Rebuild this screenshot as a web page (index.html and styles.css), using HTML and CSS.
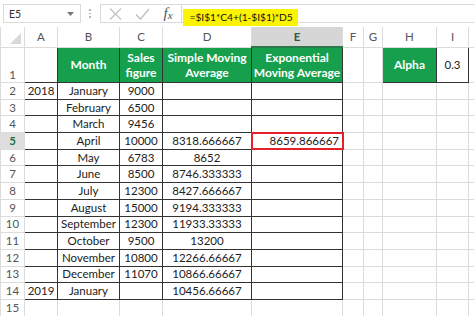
FILE: index.html
```html
<!DOCTYPE html>
<html lang="en">
  <head>
    <meta charset="UTF-8" />
    <link rel="stylesheet" href="styles.css">
    <title>Exponential Moving Average</title>
  </head>
  <body>
    <div class="formulaBar">
      <div class="nameBox">
        <span>E5</span>
        <svg class="dropArrow" width="7" height="4" viewBox="0 0 7 4"><path d="M0 0h7L3.5 4z" fill="#777"/></svg>
      </div>
      <div class="grip"><i></i><i></i><i></i></div>
      <div class="fxBox">
        <svg width="13" height="12" viewBox="0 0 13 12"><path d="M1 0.5L12 11.5M12 0.5L1 11.5" stroke="#c4c4c4" stroke-width="1.4" fill="none"/></svg>
        <svg width="15" height="12" viewBox="0 0 15 12"><path d="M1 6.5L5.5 11L14 1" stroke="#c4c4c4" stroke-width="1.6" fill="none"/></svg>
        <span class="fx">f<sub>x</sub></span>
      </div>
      <div class="formulaInput"><span class="formulaText">=$I$1*C4+(1-$I$1)*D5</span></div>
    </div>

    <table class="sheet">
      <colgroup>
        <col style="width:24px"><col style="width:33px"><col style="width:62px"><col style="width:43px">
        <col style="width:89px"><col style="width:91px"><col style="width:21px"><col style="width:19px">
        <col style="width:54px"><col style="width:32px"><col style="width:10px">
      </colgroup>
      <tr class="colHead">
        <th class="corner"><span class="tri"></span></th>
        <th>A</th><th>B</th><th>C</th><th>D</th><th class="picked">E</th><th>F</th><th>G</th><th>H</th><th>I</th><th></th>
      </tr>
      <tr class="tall">
        <th class="rowNum">1</th>
        <td class="box"></td>
        <td class="box head">Month</td>
        <td class="box head">Sales<br>figure</td>
        <td class="box head">Simple Moving<br>Average</td>
        <td class="box head">Exponential<br>Moving Average</td>
        <td></td><td></td>
        <td class="box head">Alpha</td>
        <td class="box">0.3</td>
        <td></td>
      </tr>
      <tr><th class="rowNum">2</th><td class="box">2018</td><td class="box">January</td><td class="box">9000</td><td class="box"></td><td class="box"></td><td></td><td></td><td></td><td></td><td></td></tr>
      <tr><th class="rowNum">3</th><td class="box"></td><td class="box">February</td><td class="box">6500</td><td class="box"></td><td class="box"></td><td></td><td></td><td></td><td></td><td></td></tr>
      <tr><th class="rowNum">4</th><td class="box"></td><td class="box">March</td><td class="box">9456</td><td class="box"></td><td class="box"></td><td></td><td></td><td></td><td></td><td></td></tr>
      <tr><th class="rowNum picked">5</th><td class="box"></td><td class="box">April</td><td class="box">10000</td><td class="box">8318.666667</td><td class="box active">8659.866667</td><td></td><td></td><td></td><td></td><td></td></tr>
      <tr><th class="rowNum">6</th><td class="box"></td><td class="box">May</td><td class="box">6783</td><td class="box">8652</td><td class="box"></td><td></td><td></td><td></td><td></td><td></td></tr>
      <tr><th class="rowNum">7</th><td class="box"></td><td class="box">June</td><td class="box">8500</td><td class="box">8746.333333</td><td class="box"></td><td></td><td></td><td></td><td></td><td></td></tr>
      <tr><th class="rowNum">8</th><td class="box"></td><td class="box">July</td><td class="box">12300</td><td class="box">8427.666667</td><td class="box"></td><td></td><td></td><td></td><td></td><td></td></tr>
      <tr><th class="rowNum">9</th><td class="box"></td><td class="box">August</td><td class="box">15000</td><td class="box">9194.333333</td><td class="box"></td><td></td><td></td><td></td><td></td><td></td></tr>
      <tr><th class="rowNum">10</th><td class="box"></td><td class="box">September</td><td class="box">12300</td><td class="box">11933.33333</td><td class="box"></td><td></td><td></td><td></td><td></td><td></td></tr>
      <tr><th class="rowNum">11</th><td class="box"></td><td class="box">October</td><td class="box">9500</td><td class="box">13200</td><td class="box"></td><td></td><td></td><td></td><td></td><td></td></tr>
      <tr><th class="rowNum">12</th><td class="box"></td><td class="box">November</td><td class="box">10800</td><td class="box">12266.66667</td><td class="box"></td><td></td><td></td><td></td><td></td><td></td></tr>
      <tr><th class="rowNum">13</th><td class="box"></td><td class="box">December</td><td class="box">11070</td><td class="box">10866.66667</td><td class="box"></td><td></td><td></td><td></td><td></td><td></td></tr>
      <tr><th class="rowNum">14</th><td class="box">2019</td><td class="box">January</td><td class="box"></td><td class="box">10456.66667</td><td class="box"></td><td></td><td></td><td></td><td></td><td></td></tr>
      <tr><th class="rowNum">15</th><td></td><td></td><td></td><td></td><td></td><td></td><td></td><td></td><td></td><td></td></tr>
    </table>
  </body>
</html>
```

FILE: styles.css
```css
body {
  margin: 0px;
  background-color: #ffffff;
  font-family: Lato, "Open Sans", sans-serif;
  color: #222;
  overflow: hidden;
}

/* formula bar */
.formulaBar {
  display: flex;
  align-items: center;
  height: 27px;
  padding-left: 3px;
}
.nameBox {
  display: flex;
  align-items: center;
  justify-content: space-between;
  box-sizing: border-box;
  width: 78px;
  height: 19px;
  border: 1px solid #dadada;
  padding: 0px 6px 0px 5px;
  font-size: 10.5px;
  color: #333;
}
.grip {
  display: flex;
  flex-direction: column;
  gap: 2px;
  margin: 0px 9px 0px 8px;
}
.grip i {
  width: 1.5px;
  height: 1.5px;
  background: #b5b5b5;
}
.fxBox {
  display: flex;
  align-items: center;
  box-sizing: border-box;
  width: 81px;
  height: 19px;
  border: 1px solid #dadada;
  border-right: none;
  padding-left: 8px;
  gap: 13px;
}
.fx {
  font-family: "Liberation Serif", serif;
  font-style: italic;
  font-size: 15px;
  color: #555;
  margin-left: 1px;
}
.fx sub {
  font-size: 11px;
  vertical-align: -1px;
}
.formulaInput {
  flex: 1;
  box-sizing: border-box;
  height: 19px;
  border-top: 1px solid #dadada;
  border-bottom: 1px solid #dadada;
  border-left: 1px solid #dadada;
  padding-left: 1px;
}
.formulaText {
  display: inline-block;
  height: 17px;
  line-height: 17px;
  background: #fbf400;
  padding: 0px 5px 0px 7px;
  font-size: 10.2px;
  color: #111;
}

/* sheet grid */
.sheet {
  table-layout: fixed;
  border-collapse: collapse;
  width: 478px;
  font-size: 11.5px;
}
.sheet td, .sheet th {
  border: 1px solid #dcdcdc;
  padding: 0px;
  height: 15.7px;
  text-align: center;
  white-space: nowrap;
  overflow: hidden;
  line-height: 14px;
}
.colHead th {
  height: 19px;
  font-weight: normal;
  font-size: 11.5px;
  color: #555;
  background: #ffffff;
  border-top: none;
}
.colHead th.picked {
  background: #d6d6d6;
  color: #30583f;
  font-weight: bold;
  border-bottom: 2px solid #2c7a4b;
}
.corner {
  position: relative;
}
.tri {
  position: absolute;
  right: 3px;
  bottom: 3px;
  width: 0px;
  height: 0px;
  border-left: 11px solid transparent;
  border-bottom: 11px solid #d9d9d9;
}
.rowNum {
  font-weight: normal;
  color: #555;
  font-size: 11.5px;
  border-left: none;
}
.rowNum.picked {
  background: #dedede;
  color: #217346;
  font-weight: bold;
}
.tall td, .tall th {
  height: 34px;
  vertical-align: bottom;
}
.tall td.head, .tall td.box {
  vertical-align: middle;
}
.sheet td.box {
  border: 1px solid #333;
}
.sheet td.head {
  background: #16a04e;
  color: #ffffff;
  font-weight: bold;
  font-size: 12px;
  line-height: 15px;
}
.sheet td.active {
  text-align: right;
  padding-right: 3px;
  outline: 2px solid #e4212a;
  outline-offset: -1px;
}
```
